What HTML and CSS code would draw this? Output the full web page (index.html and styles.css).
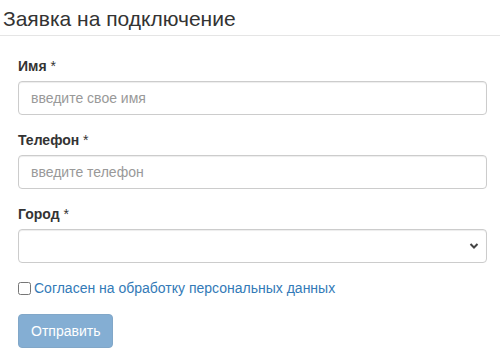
FILE: index.html
```html
<!DOCTYPE html>
<html lang="ru">
<head>
<meta charset="utf-8">
<link rel="stylesheet" href="styles.css">
</head>
<body>
<div class="page">
  <div class="header">
    <h3 class="title">Заявка на подключение</h3>
  </div>
  <form class="form">
    <div class="form-group">
      <label class="label">Имя <span class="req">*</span></label>
      <input class="control" type="text" placeholder="введите свое имя">
    </div>
    <div class="form-group">
      <label class="label">Телефон <span class="req">*</span></label>
      <input class="control" type="text" placeholder="введите телефон">
    </div>
    <div class="form-group">
      <label class="label">Город <span class="req">*</span></label>
      <div class="select-wrap">
        <select class="control select"><option></option></select>
        <svg class="chevron" width="10" height="8" viewBox="0 0 10 8"><path d="M1.5 2 L5 5.5 L8.5 2" fill="none" stroke="#444" stroke-width="2"/></svg>
      </div>
    </div>
    <div class="checkbox">
      <label class="check-label"><input class="check" type="checkbox"><span class="check-text">Согласен на обработку персональных данных</span></label>
    </div>
    <button class="btn" type="button" disabled>Отправить</button>
  </form>
</div>
</body>
</html>
```

FILE: styles.css
```css
* { box-sizing: border-box; }
html, body { margin: 0; padding: 0; background: #fff; }
body {
  font-family: "Liberation Sans", Arial, sans-serif;
  font-size: 14px;
  line-height: 20px;
  color: #333;
}
.page { width: 500px; }
.header {
  border-bottom: 1px solid #e5e5e5;
  padding: 6px 0 0 3px;
  height: 36px;
}
.title {
  margin: 0;
  font-size: 21px;
  font-weight: normal;
  line-height: 26px;
  color: #333;
}
.form {
  padding: 20px 13px 0 18px;
}
.form-group { margin-bottom: 15px; }
.label {
  display: block;
  font-weight: bold;
  margin-bottom: 5px;
}
.req { font-weight: normal; }
.control {
  display: block;
  width: 100%;
  height: 34px;
  padding: 6px 12px;
  font-family: inherit;
  font-size: 14px;
  color: #555;
  background: #fff;
  border: 1px solid #ccc;
  border-radius: 4px;
  box-shadow: inset 0 1px 1px rgba(0,0,0,.075);
  outline: none;
}
.control::placeholder { color: #999; }
.select-wrap { position: relative; }
.select { appearance: none; -webkit-appearance: none; }
.chevron { position: absolute; right: 8px; top: 13px; }
.checkbox { margin: 15px 0 16px; }
.check-label { display: flex; align-items: center; }
.check {
  margin: 0 3px 0 0;
  width: 13px;
  height: 13px;
}
.check-text { color: #337ab7; }
.btn {
  display: block;
  padding: 6px 12px;
  font-family: inherit;
  font-size: 14px;
  line-height: 20px;
  height: 34px;
  width: 95px;
  color: #fff;
  background: #337ab7;
  border: 1px solid #2e6da4;
  border-radius: 4px;
  opacity: .6;
}
```
